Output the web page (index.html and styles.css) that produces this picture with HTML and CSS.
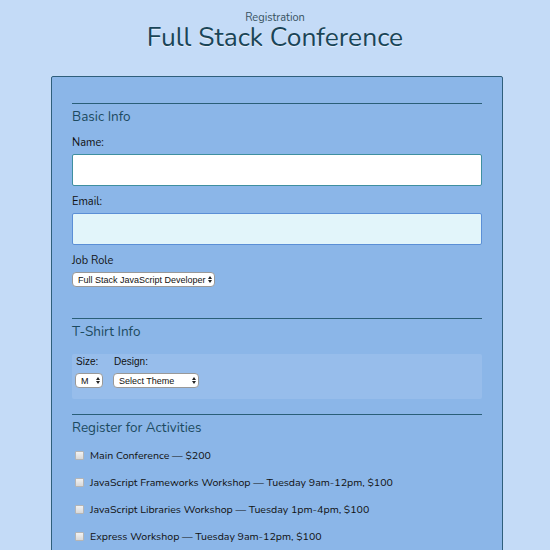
FILE: index.html
```html
<!DOCTYPE html>
<html>
<head>
<meta charset="utf-8">
<link rel="stylesheet" href="styles.css">
</head>
<body>
<header class="header">
  <div class="sub">Registration</div>
  <h1 class="title">Full Stack Conference</h1>
</header>
<form class="form">
  <fieldset class="section">
    <legend class="legend">Basic Info</legend>
    <label class="label first" for="name">Name:</label>
    <input class="text" id="name" type="text">
    <label class="label" for="mail">Email:</label>
    <input class="text email" id="mail" type="text">
    <label class="label" for="title">Job Role</label>
    <div class="selwrap"><span class="sel role">Full Stack JavaScript Developer<span class="arr"></span></span></div>
  </fieldset>
  <fieldset class="section tight">
    <legend class="legend">T-Shirt Info</legend>
    <div class="shirt">
      <div class="col">
        <span class="label2">Size:</span>
        <span class="sel size">M<span class="arr"></span></span>
      </div>
      <div class="col">
        <span class="label2">Design:</span>
        <span class="sel design">Select Theme<span class="arr"></span></span>
      </div>
    </div>
  </fieldset>
  <fieldset class="section">
    <legend class="legend">Register for Activities</legend>
    <label class="act first"><span class="cb"></span>Main Conference — $200</label>
    <label class="act"><span class="cb"></span>JavaScript Frameworks Workshop — Tuesday 9am-12pm, $100</label>
    <label class="act"><span class="cb"></span>JavaScript Libraries Workshop — Tuesday 1pm-4pm, $100</label>
    <label class="act"><span class="cb"></span>Express Workshop — Tuesday 9am-12pm, $100</label>
  </fieldset>
</form>
</body>
</html>
```
FILE: styles.css
```css
html, body {
  margin: 0;
  padding: 0;
  background: #c4dbf7;
  font-family: "Nunito", "Lato", "Open Sans", sans-serif;
  overflow: hidden;
}
.header {
  text-align: center;
  padding-top: 12px;
  height: 64px;
  box-sizing: border-box;
}
.sub {
  font-size: 11px;
  color: #37525f;
  line-height: 11px;
}
.title {
  margin: 1px 0 0 0;
  font-size: 26.4px;
  font-weight: 400;
  color: #1a4558;
  line-height: 26px;
  text-shadow: 0 1px 1px rgba(255,255,255,0.6);
}
.form {
  margin: 12px 0 0 51px;
  width: 452px;
  box-sizing: border-box;
  background: #8bb6e8;
  border: 1px solid #2f5f7c;
  border-radius: 2px;
  padding: 26px 20px 0 20px;
  height: 600px;
}
.section {
  border: 0;
  border-top: 1px solid #2a5f78;
  margin: 0 0 31px 0;
  padding: 0;
  display: flex;
  flex-direction: column;
}
.section.tight { margin-bottom: 15px; }
.legend {
  float: left;
  width: 100%;
  padding: 0;
  font-size: 13.5px;
  color: #1c4a60;
  margin: 0;
  line-height: 18px;
  margin-top: 4px;
}
.label {
  font-size: 11px;
  color: #111;
  line-height: 12px;
  margin-top: 10px;
  margin-bottom: 5px;
}
.label.first { margin-top: 11px; }
.text {
  height: 32px;
  box-sizing: border-box;
  width: 100%;
  background: #fff;
  border: 1px solid #3f8fa0;
  border-radius: 2px;
  margin: 0;
}
.email {
  background: #e2f5fa;
  border-color: #5b8fd6;
}
.selwrap { display: flex; }
.sel {
  display: inline-flex;
  align-items: center;
  height: 15px;
  box-sizing: border-box;
  background: #fff;
  border: 1px solid #999;
  border-radius: 4px;
  font-family: "Liberation Sans", Arial, sans-serif;
  font-size: 9px;
  color: #111;
  padding: 0 12px 0 5px;
  position: relative;
  white-space: nowrap;
}
.arr {
  position: absolute;
  right: 3px;
  top: 3px;
  width: 0;
  height: 7px;
}
.arr::before, .arr::after {
  content: "";
  position: absolute;
  left: -3px;
  border-left: 2.5px solid transparent;
  border-right: 2.5px solid transparent;
}
.arr::before { top: 0; border-bottom: 3px solid #222; }
.arr::after { top: 4px; border-top: 3px solid #222; }
.role { width: 143px; padding-right: 10px; }
.shirt {
  margin-top: 13px;
  background: #97bdeb;
  height: 45px;
  border-radius: 2px;
  display: flex;
  gap: 10px;
  padding: 1px 0 0 3px;
  box-sizing: border-box;
}
.col {
  display: flex;
  flex-direction: column;
  align-items: flex-start;
  gap: 5px;
}
.label2 {
  font-family: "Liberation Sans", Arial, sans-serif;
  font-size: 10px;
  color: #111;
  line-height: 13px;
  padding-left: 1px;
}
.size { width: 28px; }
.design { width: 86px; }
.act {
  display: flex;
  align-items: center;
  font-size: 10.6px;
  color: #111;
  height: 14px;
  margin-top: 13px;
}
.act.first { margin-top: 11px; }
.cb {
  width: 7px;
  height: 7px;
  border: 1px solid #b5b5b5;
  background: linear-gradient(#f2f2f2, #d8d8d8);
  border-radius: 1px;
  margin: 0 6px 0 3px;
}
```
